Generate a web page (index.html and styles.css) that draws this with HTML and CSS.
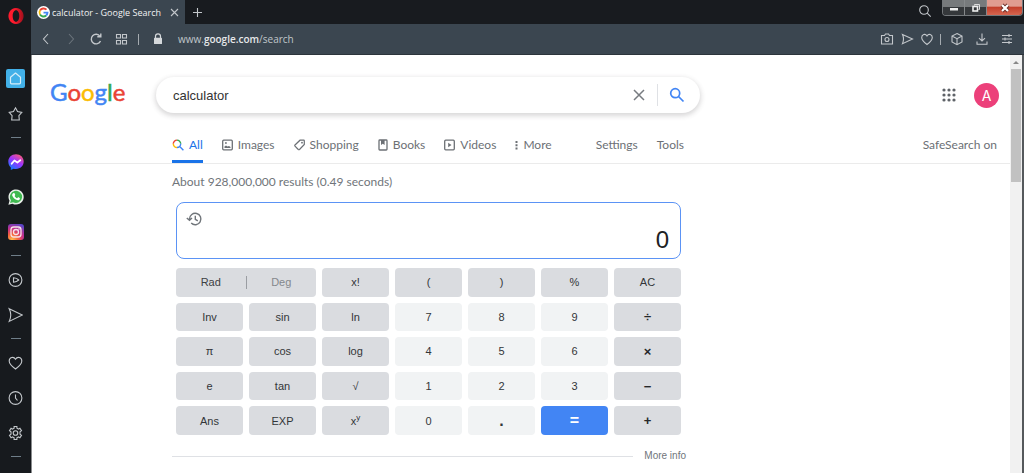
FILE: index.html
```html
<!DOCTYPE html>
<html lang="en">
<head>
<meta charset="utf-8">
<title>calculator - Google Search</title>
<link rel="stylesheet" href="styles.css">
</head>
<body>
<div class="window">
  <aside class="sidebar">
    <button class="opera" aria-label="Opera menu"><svg width="16" height="16" viewBox="0 0 16 16"><defs><linearGradient id="op" x1="0" x2="1"><stop offset=".4" stop-color="#ff1b2d"/><stop offset="1" stop-color="#a0101c"/></linearGradient></defs><path fill="url(#op)" fill-rule="evenodd" d="M8 0a7.600 8 0 1 0 .01 0ZM8 2.200c2 0 3.300 2.500 3.300 5.800S10 13.800 8 13.800 4.700 11.300 4.700 8 6 2.200 8 2.200Z"/></svg></button>
    <nav class="dock" aria-label="Sidebar">
      <button class="dock-item" aria-label="Home"><svg width="19" height="19" viewBox="0 0 19 19"><rect width="19" height="19" rx="2" fill="#42b0e8"/><path d="M4.500 8.200 9.500 4l5 4.200v5.600q0 1-1 1h-8q-1 0-1-1Z" fill="none" stroke="#d5edf9" stroke-width="1.200" stroke-linejoin="round"/></svg></button>
      <button class="dock-item" aria-label="Bookmarks"><svg class="line" width="15" height="16" viewBox="0 0 15 16"><path d="M7.500 1.800 9.500 5.500l4.300.9-2.900 3.300.4 4.300H3.700l.4-4.300L1.200 6.400 5.500 5.500Z"/></svg></button>
      <hr class="dash">
      <button class="dock-item" aria-label="Messenger"><svg width="16" height="16" viewBox="0 0 16 16"><defs><linearGradient id="ms" x1=".2" y1="1" x2=".8" y2="0"><stop stop-color="#0a7cff"/><stop offset=".55" stop-color="#a033ff"/><stop offset="1" stop-color="#ff5c70"/></linearGradient></defs><path fill="url(#ms)" d="M8 .3c4.500 0 7.700 3.100 7.700 7.300S12.500 15 8 15c-.8 0-1.700-.1-2.400-.3L2.800 16v-2.500C1.200 12.200.3 10.200.3 7.600.3 3.400 3.500.3 8 .3Z"/><path d="m3.700 9.700 2.700-3.200 3 2 2.900-2.200" fill="none" stroke="#fff" stroke-width="1.800" stroke-linejoin="round" stroke-linecap="round"/></svg></button>
      <button class="dock-item" aria-label="WhatsApp"><svg width="16" height="16" viewBox="0 0 16 16"><path fill="#e8efe9" d="M.4 15.800 1.500 11.800A7.600 7.600 0 1 1 4.500 14.700Z"/><path fill="#3fb950" d="m2.100 14 .8-2.700a6.100 6.100 0 1 1 2.200 2Z"/><path fill="#fff" d="M5.600 4.100c.6-.2.900-.1 1.100.5l.5 1.200c.1.400-.4.900-.6 1.200.6 1.100 1.300 1.800 2.500 2.300l.8-.9c.3-.3 1.700.6 2 .8.200 1.300-.9 2.200-2.200 2.100-2.900-.6-4.700-2.400-5.500-4.700-.2-1 .4-2.100 1.400-2.500Z"/></svg></button>
      <button class="dock-item" aria-label="Instagram"><svg width="16" height="16" viewBox="0 0 16 16"><defs><radialGradient id="ig" cx=".25" cy="1" r="1.100"><stop stop-color="#ffc14d"/><stop offset=".35" stop-color="#f4603c"/><stop offset=".65" stop-color="#c62f8c"/><stop offset="1" stop-color="#5b46c8"/></radialGradient></defs><rect width="16" height="16" rx="3" fill="url(#ig)"/><g fill="none" stroke="#f6e3ea" stroke-width="1.300"><rect x="3" y="3" width="10" height="10" rx="2.800"/><circle cx="8" cy="8" r="2.500"/></g><circle cx="11" cy="5" r=".8" fill="#f6e3ea"/></svg></button>
      <hr class="dash">
      <button class="dock-item" aria-label="Player"><svg class="line" width="15" height="16" viewBox="0 0 15 16"><circle cx="7.500" cy="8" r="6.400"/><path d="M5.500 5.800v4.400q3.300-.3 5.200-2.200Q8.800 6 5.500 5.800Z"/></svg></button>
      <button class="dock-item" aria-label="My Flow"><svg class="line" width="15" height="16" viewBox="0 0 15 16"><path d="M1.200 1.700 14.300 8 1.200 14.400Q4.300 8 1.200 1.700Z"/></svg></button>
      <hr class="dash">
      <button class="dock-item" aria-label="Likes"><svg class="line" width="15" height="16" viewBox="0 0 15 16"><path d="M7.500 14C3.500 11 1.200 8.800 1.200 5.900c0-3.400 4.300-5 6.300-1.700 2-3.300 6.300-1.700 6.300 1.700 0 2.900-2.300 5.100-6.300 8.100Z"/></svg></button>
      <button class="dock-item" aria-label="History"><svg class="line" width="15" height="16" viewBox="0 0 15 16"><circle cx="7.500" cy="8" r="6.400"/><path d="M7.500 4.400V8l2 2.500"/></svg></button>
      <button class="dock-item" aria-label="Settings"><svg class="line" width="15" height="16" viewBox="0 0 15 16"><path d="M6.100 3.200V1.500h2.800v1.700l1.600.9 1.400-.9 1.600 2.500-1.500 1v2.600l1.500 1-1.600 2.500-1.400-.9-1.600.9v1.700H6.100v-1.700l-1.600-.9-1.400.9-1.600-2.500 1.500-1V6.700l-1.500-1 1.600-2.500 1.400.9Z"/><circle cx="7.500" cy="8" r="2.300"/></svg></button>
      <hr class="dash">
    </nav>
  </aside>

  <div class="main">
    <header class="tabbar">
      <div class="tab">
        <svg width="13" height="13" viewBox="0 0 13 13"><circle cx="6.500" cy="6.500" r="6.500" fill="#fff"/><g fill="none" stroke-width="1.900"><path d="M9.500 3.700A4.100 4.100 0 0 0 3 4.500" stroke="#ea4335"/><path d="M3 4.500a4.100 4.100 0 0 0 0 4" stroke="#fbbc05"/><path d="M3 8.500a4.100 4.100 0 0 0 6.200 1" stroke="#34a853"/><path d="M9.200 9.500a4 4 0 0 0 1.300-2.900H6.500" stroke="#4285f4"/></g></svg>
        <span class="tab-title">calculator - Google Search</span>
        <button class="tab-close" aria-label="Close tab"><svg class="line" width="9" height="9" viewBox="0 0 9 9"><path d="m1 1 7 7M8 1 1 8"/></svg></button>
      </div>
      <button class="tab-new" aria-label="New tab"><svg class="line" width="11" height="11" viewBox="0 0 11 11"><path d="M5.500 1v9M1 5.500h9"/></svg></button>
      <div class="window-tools">
        <button class="tab-search" aria-label="Search tabs"><svg class="line" width="14" height="14" viewBox="0 0 14 14"><circle cx="6" cy="6" r="4.300"/><path d="m9.200 9.200 3.500 3.500"/></svg></button>
        <div class="frame-buttons">
          <button class="frame-button" aria-label="Minimize"><svg width="10" height="10" viewBox="0 0 10 10"><rect x="1" y="5" width="8" height="2.500" fill="#eee"/></svg></button>
          <button class="frame-button" aria-label="Restore"><svg width="10" height="10" viewBox="0 0 10 10"><path d="M3.500 2.500v-1h5v5h-1" fill="none" stroke="#ddd"/><rect x="2" y="3.500" width="4.500" height="4.500" fill="none" stroke="#eee" stroke-width="1.600"/></svg></button>
          <button class="frame-button frame-close" aria-label="Close"><svg width="12" height="10" viewBox="0 0 12 10"><path d="m3 2 6 6M9 2 3 8" stroke="#6b2d26" stroke-width="4"/><path d="m3 2 6 6M9 2 3 8" stroke="#fff" stroke-width="2.200"/></svg></button>
        </div>
      </div>
    </header>

    <div class="toolbar">
      <button class="tool" aria-label="Back"><svg class="line" width="14" height="14" viewBox="0 0 14 14"><path d="M9 2 4.500 7 9 12"/></svg></button>
      <button class="tool tool-off" aria-label="Forward"><svg class="line" width="14" height="14" viewBox="0 0 14 14"><path d="M5 2l4.500 5L5 12"/></svg></button>
      <button class="tool" aria-label="Reload"><svg class="line" width="14" height="14" viewBox="0 0 14 14"><path d="M11.500 9A4.800 4.800 0 1 1 11 4.300M11.800 1.500v3.300H8.300" stroke-width="1.400"/></svg></button>
      <button class="tool" aria-label="Speed dial"><svg class="line" width="14" height="14" viewBox="0 0 14 14"><path d="M2.500 2.500h4v3.500h-4zM8.500 2.500h4v3.500h-4zM2.500 8.500h4v3.500h-4zM8.500 8.500h4v3.500h-4z"/></svg></button>
      <span class="divider"></span>
      <button class="tool lock" aria-label="Site information"><svg width="12" height="14" viewBox="0 0 12 14"><path d="M3.500 6V4.300a2.500 2.500 0 0 1 5 0V6" fill="none" stroke="#d5d8db" stroke-width="1.200"/><rect x="2" y="5.700" width="8" height="6.300" rx=".6" fill="#d5d8db"/></svg></button>
      <a class="url" href="#">www.<strong>google.com</strong>/search</a>
      <div class="tools-right">
        <button class="tool-small" aria-label="Snapshot"><svg class="line" width="14" height="14" viewBox="0 0 14 14"><path d="M1.500 3.500h3L5.500 2h3l1 1.500h3v8.500h-11Z"/><circle cx="7" cy="7.500" r="2"/></svg></button>
        <button class="tool-small" aria-label="Send to My Flow"><svg class="line" width="14" height="14" viewBox="0 0 14 14"><path d="M2.500 2.500 12.500 7l-10 4.700Q4.500 7 2.500 2.500Z"/></svg></button>
        <button class="tool-small" aria-label="Save page"><svg class="line" width="14" height="14" viewBox="0 0 14 14"><path d="M7 12.500C3.500 10 1.700 8 1.700 5.600 1.700 2.500 5.300 1.200 7 4c1.700-2.800 5.300-1.500 5.300 1.600 0 2.400-1.800 4.400-5.300 6.900Z"/></svg></button>
        <span class="divider"></span>
        <button class="tool" aria-label="Wallet"><svg class="line" width="14" height="14" viewBox="0 0 14 14"><path d="m7 1.500 5 2.500v6l-5 2.700L2 10V4ZM2 4l5 2.700L12 4M7 6.700v6"/></svg></button>
        <button class="tool" aria-label="Downloads"><svg class="line" width="14" height="14" viewBox="0 0 14 14"><path d="M7 1.500v7.300M4 6.200l3 2.800 3-2.800M2 9.500v2.700h10V9.500"/></svg></button>
        <button class="tool" aria-label="Easy setup"><svg class="line" width="14" height="14" viewBox="0 0 14 14"><path d="M2 3.500h10M2 7h10M2 10.500h10M9 2v3M5 5.500v3M9 9v3"/></svg></button>
      </div>
    </div>

    <div class="viewport">
      <main class="page">
        <div class="search-head">
          <a class="logo" href="#" aria-label="Google"><span class="blue">G</span><span class="red">o</span><span class="yellow">o</span><span class="blue">g</span><span class="green">l</span><span class="red">e</span></a>
          <form class="search">
            <input class="search-text" type="text" value="calculator" aria-label="Search">
            <button class="search-clear" type="button" aria-label="Clear"><svg width="14" height="14" viewBox="0 0 14 14"><path d="m2 2 10 10M12 2 2 12" stroke="#777b80" stroke-width="1.500"/></svg></button>
            <button class="search-go" type="button" aria-label="Search"><svg width="16" height="16" viewBox="0 0 16 16" fill="none" stroke="#4285f4" stroke-width="1.700"><circle cx="6.200" cy="6.200" r="4.500"/><path d="m9.500 9.500 5 5"/></svg></button>
          </form>
          <button class="apps" aria-label="Google apps"><svg width="14" height="14" viewBox="0 0 14 14" fill="#5f6368"><circle cx="2" cy="2" r="1.600"/><circle cx="7" cy="2" r="1.600"/><circle cx="12" cy="2" r="1.600"/><circle cx="2" cy="7" r="1.600"/><circle cx="7" cy="7" r="1.600"/><circle cx="12" cy="7" r="1.600"/><circle cx="2" cy="12" r="1.600"/><circle cx="7" cy="12" r="1.600"/><circle cx="12" cy="12" r="1.600"/></svg></button>
          <button class="avatar">A</button>
        </div>

        <div class="nav-row">
          <nav class="filters" aria-label="Filters">
            <a class="filter filter-on" href="#"><svg width="12" height="12" viewBox="0 0 12 12" fill="none" stroke-width="1.400"><path d="M1.300 4.800A3.700 3.700 0 0 1 5 1.100" stroke="#ea4335"/><path d="M5 1.100a3.700 3.700 0 0 1 3.700 3.700" stroke="#34a853"/><path d="M8.700 4.800A3.700 3.700 0 0 1 5 8.500M7.700 7.500l3.700 3.700" stroke="#4285f4"/><path d="M5 8.500a3.700 3.700 0 0 1-3.700-3.700" stroke="#fbbc05"/></svg>All</a>
            <a class="filter" href="#"><svg width="11" height="12" viewBox="0 0 11 12"><rect x=".7" y="1.200" width="9.600" height="9.600" rx="1" fill="none" stroke="#6c7075" stroke-width="1.300"/><path d="M2.500 9V7.500L4 6.500l1.500 1L7 7l1.500 1v1ZM3 3.300h1.800v1.500H3Z" fill="#6c7075"/></svg>Images</a>
            <a class="filter" href="#"><svg width="11" height="12" viewBox="0 0 11 12"><path d="M6 1.200h3.700q.6 0 .6.600v3.700L5.500 10.500q-.6.500-1.200 0L1 7.200q-.5-.6 0-1.200Z" fill="none" stroke="#6c7075" stroke-width="1.200"/><circle cx="8" cy="3.700" r=".9" fill="#6c7075"/></svg>Shopping</a>
            <a class="filter" href="#"><svg width="10" height="12" viewBox="0 0 10 12"><rect x="1" y="1" width="8" height="10" rx=".8" fill="none" stroke="#6c7075" stroke-width="1.300"/><path d="M3 1h3.600v5L4.800 4.700 3 6Z" fill="#6c7075"/></svg>Books</a>
            <a class="filter" href="#"><svg width="11" height="12" viewBox="0 0 11 12"><rect x=".7" y="1.200" width="9.600" height="9.600" rx="1" fill="none" stroke="#6c7075" stroke-width="1.300"/><path d="M4.200 3.800 7.500 6 4.200 8.200Z" fill="#6c7075"/></svg>Videos</a>
            <a class="filter" href="#"><svg width="3" height="12" viewBox="0 0 3 12" fill="#6c7075"><path d="M.5 2h2v2h-2zM.5 5.200h2v2h-2zM.5 8.400h2v2h-2z"/></svg>More</a>
            <a class="filter filter-end" href="#">Settings</a>
            <a class="filter" href="#">Tools</a>
          </nav>
          <a class="safe" href="#">SafeSearch on</a>
        </div>

        <section class="results">
          <p class="stats">About 928,000,000 results (0.49 seconds)</p>
          <div class="calc">
            <div class="display">
              <button class="recall" aria-label="Calculation history"><svg width="17" height="16" viewBox="0 0 17 16" fill="none" stroke="#70757a" stroke-width="1.400"><path d="M3.500 8a5.700 5.700 0 1 1 1.700 4.100M.8 7 3.500 9.300 6 7M9.300 4.700v3.600l2.500 1.600"/></svg></button>
              <output class="value">0</output>
            </div>
            <div class="keys">
              <div class="angle"><button class="angle-mode">Rad</button><span class="angle-line"></span><button class="angle-mode angle-off">Deg</button></div>
              <button class="key">x!</button><button class="key">(</button><button class="key">)</button><button class="key">%</button><button class="key">AC</button>
              <button class="key">Inv</button><button class="key">sin</button><button class="key">ln</button><button class="key digit">7</button><button class="key digit">8</button><button class="key digit">9</button><button class="key sign">÷</button>
              <button class="key">π</button><button class="key">cos</button><button class="key">log</button><button class="key digit">4</button><button class="key digit">5</button><button class="key digit">6</button><button class="key sign">×</button>
              <button class="key">e</button><button class="key">tan</button><button class="key">√</button><button class="key digit">1</button><button class="key digit">2</button><button class="key digit">3</button><button class="key sign">−</button>
              <button class="key">Ans</button><button class="key">EXP</button><button class="key"><span>x<sup>y</sup></span></button><button class="key digit">0</button><button class="key digit point">.</button><button class="key equals">=</button><button class="key sign">+</button>
            </div>
          </div>
          <div class="more"><hr class="more-line"><a class="more-link" href="#">More info</a></div>
        </section>
      </main>
      <div class="scrollbar" aria-hidden="true"><span class="arrow"></span><span class="thumb"></span></div>
    </div>
  </div>
</div>
</body>
</html>
```
FILE: styles.css
```css
* { box-sizing: border-box; }

body {
  margin: 0;
  background: #fff;
  font-family: "Liberation Sans", Arial, sans-serif;
  font-size: 11px;
  color: #3c4043;
}

button {
  margin: 0;
  padding: 0;
  border: 0;
  background: none;
  font: inherit;
  color: inherit;
  display: flex;
  align-items: center;
  justify-content: center;
}

a { color: inherit; text-decoration: none; }
svg { display: block; flex: none; }
.line { fill: none; stroke: #c3c7cb; stroke-width: 1.1; }

.window {
  display: grid;
  grid-template-columns: 31px 1fr;
  height: 100vh;
  overflow: hidden;
}

/* Sidebar */
.sidebar {
  background: #171a1e;
  display: flex;
  flex-direction: column;
  min-height: 0;
}
.opera { height: 32px; width: 100%; }
.dock { padding-top: 29px; }
.dock-item { width: 100%; height: 35px; }
.dash {
  width: 10px;
  height: 1px;
  margin: 6px auto;
  border: 0;
  background: #6f7e89;
}

/* Tabs and toolbar */
.main { display: flex; flex-direction: column; min-width: 0; min-height: 0; }
.tabbar {
  display: flex;
  height: 24px;
  background: #181b1f;
  font-family: "Open Sans", sans-serif;
}
.tab {
  display: flex;
  align-items: center;
  gap: 2px;
  padding: 0 6px 0 6px;
  width: 154px;
  background: #3b4650;
  color: #f0f1f2;
  font-size: 9px;
}
.tab-title { flex: 1; white-space: nowrap; }
.tab-close { width: 10px; height: 16px; }
.tab-new { width: 25px; height: 24px; }
.window-tools { display: flex; margin-left: auto; gap: 10px; padding-right: 1px; }
.tab-search { width: 14px; height: 22px; }
.frame-buttons {
  display: flex;
  height: 16px;
  border: 1px solid #74787b;
  border-top: 0;
  border-radius: 0 0 4px 4px;
  overflow: hidden;
}
.frame-button {
  width: 22px;
  background: linear-gradient(#777a7c 0 45%, #35383b 50%);
  border-right: 1px solid #85888a;
}
.frame-close {
  width: 35px;
  border: 0;
  background: linear-gradient(#e09c90 0 40%, #c4402c 50%, #d66650);
}
.toolbar {
  display: flex;
  align-items: center;
  height: 31px;
  padding: 0 5px 0 2px;
  background: #3b4650;
  border-bottom: 1px solid #2c343b;
}
.tool { width: 25px; height: 24px; }
.tool-small { width: 20px; height: 24px; }
.tool-off { opacity: 0.35; }
.divider { width: 1px; height: 11px; margin: 0 5px; background: #a5abb0; }
.lock { width: 28px; }
.url {
  margin-left: 6px;
  font: 10px/16px "Open Sans", sans-serif;
  color: #c0c6cb;
}
.url strong { font-weight: 600; color: #e6e8ea; }
.tools-right { display: flex; align-items: center; margin-left: auto; }
.tools-right .divider { margin: 0 3px; }

/* Page */
.viewport { display: flex; flex: 1; min-height: 0; border-left: 1px solid #8a8c8e; }
.page { flex: 1; min-width: 0; overflow: hidden; }
.search-head {
  display: flex;
  align-items: center;
  height: 80px;
  padding: 0 11px 0 18px;
}
.logo {
  width: 106px;
  padding-bottom: 6px;
  font: 24px/30px Lato, sans-serif;
  -webkit-text-stroke: 0.5px;
}
.blue { color: #4285f4; }
.red { color: #ea4335; }
.yellow { color: #fbbc05; }
.green { color: #34a853; }
.search {
  display: flex;
  align-items: center;
  width: 544px;
  height: 36px;
  border-radius: 18px;
  box-shadow: 0 2px 5px 1px rgba(64, 60, 67, 0.2);
}
.search-text {
  flex: 1;
  min-width: 0;
  padding: 0 0 0 17px;
  border: 0;
  outline: 0;
  background: none;
  font: 13px "Liberation Sans", Arial, sans-serif;
  color: #333;
}
.search-clear { width: 37px; height: 22px; }
.search-go { width: 43px; height: 22px; padding-right: 5px; border-left: 1px solid #dfe1e5; }
.apps { margin-left: auto; width: 14px; height: 24px; }
.avatar {
  width: 25px;
  height: 25px;
  margin-left: 18px;
  border-radius: 50%;
  background: #ec407a;
  color: #fff;
  font: 14px Inter, sans-serif;
}
.nav-row {
  display: flex;
  justify-content: space-between;
  height: 29px;
  padding: 0 13px 0 140px;
  border-bottom: 1px solid #ebebeb;
  font: 12px Lato, sans-serif;
  color: #6c7075;
}
.filters { display: flex; gap: 19px; width: 512px; }
.filter {
  display: flex;
  align-items: center;
  gap: 5px;
  height: 28px;
  padding-bottom: 9px;
  white-space: nowrap;
}
.filter-on { color: #1a73e8; border-bottom: 3px solid #1a73e8; padding-bottom: 6px; }
.filter-end { margin-left: auto; }
.safe { line-height: 20px; }

.results { width: 514px; margin-left: 140px; }
.stats {
  margin: 9px 0 12px;
  font: 12px/17px Lato, sans-serif;
  color: #70757a;
}
.calc { padding: 0 5px 0 4px; }
.display {
  display: flex;
  justify-content: space-between;
  height: 57px;
  padding: 8px 11px 4px 9px;
  border: 1px solid #5b93f5;
  border-radius: 8px;
}
.recall { width: 17px; height: 16px; }
.value { align-self: flex-end; font-size: 24px; line-height: 28px; color: #202124; }
.keys {
  display: grid;
  grid-template-columns: repeat(7, 1fr);
  grid-auto-rows: 1fr;
  gap: 6px;
  height: 167px;
  margin-top: 9px;
}
.key {
  background: #dadce0;
  border-radius: 4px;
  color: #333639;
}
.key sup { font-size: 8px; line-height: 1px; }
.digit { background: #f1f3f4; }
.sign { font-size: 13px; font-weight: bold; color: #26282b; }
.point { font-size: 16px; font-weight: bold; }
.equals { background: #4285f4; color: #fff; font-size: 16px; font-weight: bold; }
.angle {
  grid-column: span 2;
  display: flex;
  align-items: center;
  background: #dadce0;
  border-radius: 4px;
}
.angle-mode { flex: 1; height: 100%; }
.angle-line { width: 1px; height: 13px; background: #9a9da2; }
.angle-off { color: #84888d; }
.more {
  display: flex;
  align-items: center;
  gap: 11px;
  margin-top: 14px;
  font-size: 10px;
  color: #70757a;
}
.more-line { flex: 1; height: 1px; margin: 0; border: 0; background: #dfe1e5; }
.more-link { line-height: 14px; }

/* Scrollbar */
.scrollbar {
  display: flex;
  flex-direction: column;
  align-items: center;
  width: 14px;
  background: #f1f1f1;
  border-right: 2px solid #55595c;
}
.arrow {
  margin: 6px 0 5px;
  border: 3px solid transparent;
  border-top: 0;
  border-bottom: 3px solid #888;
}
.thumb { width: 10px; height: 113px; background: #c1c1c1; }
```
